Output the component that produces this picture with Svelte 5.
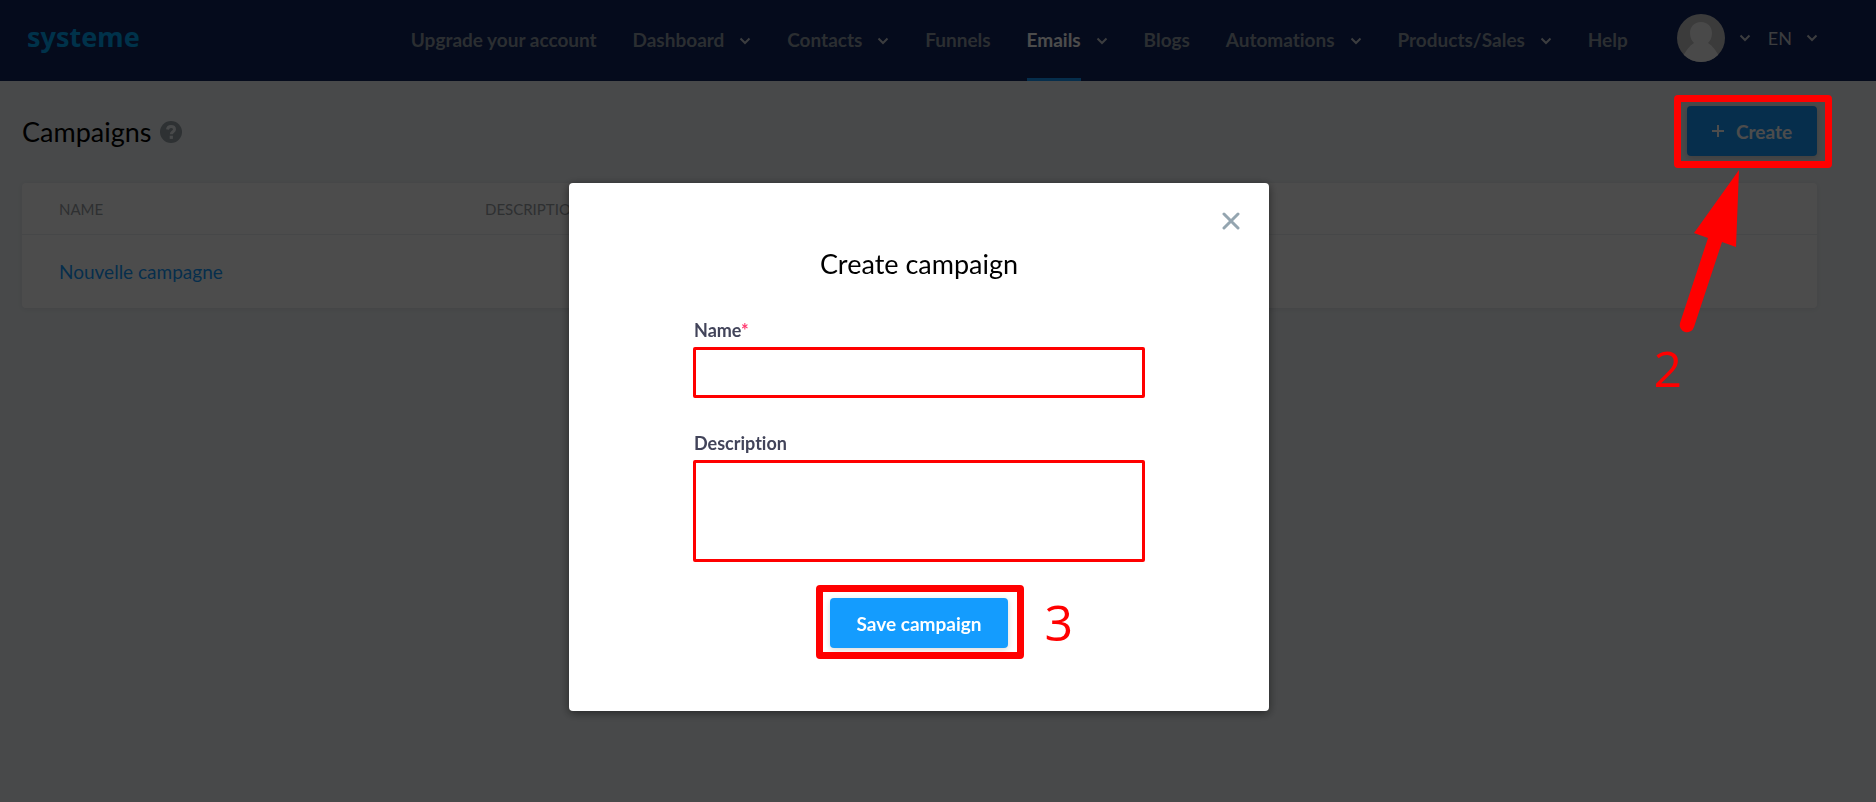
<script>
    let showModal = true;
    let name = '';
    let description = '';

    const links = [
        { label: 'Upgrade your account' },
        { label: 'Dashboard', menu: true },
        { label: 'Contacts', menu: true },
        { label: 'Funnels' },
        { label: 'Emails', menu: true, active: true },
        { label: 'Blogs' },
        { label: 'Automations', menu: true },
        { label: 'Products/Sales', menu: true },
        { label: 'Help' }
    ];

    const campaigns = [{ name: 'Nouvelle campagne', description: '' }];
</script>

{#snippet chevron()}
    <svg class="chevron" viewBox="0 0 12 8" aria-hidden="true">
        <path d="M1.500 1.500L6 6l4.500-4.500" />
    </svg>
{/snippet}

<div class="page">
    <header>
        <a class="logo" href="#home">systeme</a>
        <nav>
            {#each links as link}
                <a href="#{link.label}" class:active={link.active}>
                    <span>{link.label}</span>
                    {#if link.menu}{@render chevron()}{/if}
                </a>
            {/each}
        </nav>
        <button class="account" aria-label="Account">
            <svg class="avatar" viewBox="0 0 48 48" aria-hidden="true">
                <clipPath id="round"><circle cx="24" cy="24" r="24" /></clipPath>
                <g clip-path="url(#round)">
                    <rect width="48" height="48" fill="#c5c5c5" />
                    <path d="M24 8c7 0 11 5 11 11 0 5-2 8-4 10 5 3 8 8 11 13v8H6v-8c3-5 6-10 11-13-2-2-4-5-4-10C13 13 17 8 24 8z" fill="#f4f4f4" />
                </g>
            </svg>
            {@render chevron()}
        </button>
        <button class="lang">
            EN
            {@render chevron()}
        </button>
    </header>

    <main>
        <div class="title-row">
            <div class="title">
                <h1>Campaigns</h1>
                <svg class="help" viewBox="0 0 22 22" aria-hidden="true">
                    <circle cx="11" cy="11" r="11" />
                    <path d="M7.500 8.500C7.800 6.300 9.200 5.500 11 5.500c2 0 3.500 1.100 3.500 2.900 0 2.300-3.200 2.300-3.200 4.800" />
                    <rect x="9.700" y="14.700" width="3.200" height="3.200" />
                </svg>
            </div>
            <div class="create-wrap">
                <button class="primary create" on:click={() => showModal = true}>
                    <svg class="plus" viewBox="0 0 12 12" aria-hidden="true"><path d="M6 0v12M0 6h12" /></svg>
                    Create
                </button>
                <div class="marker create-marker"></div>
                <svg class="arrow" viewBox="0 0 64 168" aria-hidden="true">
                    <path d="M62 3L59 80 45 75 17 160a7 7 0 0 1-14-4L31 71 17 66z" />
                </svg>
                <span class="step step-two">2</span>
            </div>
        </div>

        <table>
            <thead>
                <tr>
                    <th>NAME</th>
                    <th>DESCRIPTION</th>
                </tr>
            </thead>
            <tbody>
                {#each campaigns as campaign}
                    <tr>
                        <td><a href="#campaign">{campaign.name}</a></td>
                        <td>{campaign.description}</td>
                    </tr>
                {/each}
            </tbody>
        </table>
    </main>
</div>

{#if showModal}
<div class="overlay">
    <div class="modal" role="dialog" aria-modal="true" aria-labelledby="modal-title">
        <button class="close" on:click={() => showModal = false} aria-label="Close">
            <svg viewBox="0 0 18 18" aria-hidden="true"><path d="M2 2l14 14M16 2L2 16" /></svg>
        </button>
        <h2 id="modal-title">Create campaign</h2>
        <form on:submit|preventDefault>
            <label for="name">Name<span class="required">*</span></label>
            <input id="name" type="text" bind:value={name} />
            <label for="description">Description</label>
            <textarea id="description" bind:value={description}></textarea>
            <div class="save-wrap">
                <button class="primary save" type="submit">Save campaign</button>
                <div class="marker save-marker"></div>
                <span class="step step-three">3</span>
            </div>
        </form>
    </div>
</div>
{/if}

<style>
    :global(body) {
        margin: 0;
        background: #f1f5f8;
        font-family: Lato, "Open Sans", sans-serif;
        font-variant-ligatures: none;
    }

    .page {
        min-height: 100vh;
    }

    a {
        text-decoration: none;
    }

    button {
        font-family: inherit;
        border: none;
        background: none;
        padding: 0;
        cursor: pointer;
    }

    /* --- HEADER --- */
    header {
        display: flex;
        align-items: center;
        height: 81px;
        padding: 0 58px 0 27px;
        background: #11255e;
    }

    .logo {
        color: #00a8f8;
        font-family: "Noto Sans", sans-serif;
        font-size: 27px;
        font-weight: 700;
        line-height: 32px;
        padding-bottom: 8px;
    }

    nav {
        flex: 1;
        display: flex;
        justify-content: space-between;
        align-self: stretch;
        margin: 0 49px 0 271px;
    }

    nav a {
        display: flex;
        align-items: center;
        gap: 15px;
        color: #8f9ba5;
        font-size: 19px;
        font-weight: 700;
    }

    nav span {
        height: 78px;
        line-height: 80px;
        border-bottom: 3px solid transparent;
    }

    nav .active span {
        color: #fff;
        border-color: #149cfe;
    }

    .chevron {
        width: 12px;
        height: 8px;
        fill: none;
        stroke: #c8ccd2;
        stroke-width: 2;
    }

    .account,
    .lang {
        display: flex;
        align-items: center;
        gap: 14px;
        color: #c8ccd2;
        font-size: 18px;
        padding-bottom: 5px;
    }

    .lang {
        margin-left: 17px;
    }

    .avatar {
        width: 48px;
        height: 48px;
    }

    /* --- CONTENT --- */
    main {
        padding: 25px 59px 0 22px;
    }

    .title-row,
    .title {
        display: flex;
        align-items: center;
    }

    .title-row {
        justify-content: space-between;
        margin-bottom: 27px;
    }

    .title {
        gap: 8px;
        padding-top: 2px;
    }

    h1,
    h2 {
        margin: 0;
        font-size: 27px;
        font-weight: 400;
        line-height: 32px;
    }

    .help {
        width: 22px;
        height: 22px;
        fill: #99a3aa;
    }

    .help path {
        fill: none;
        stroke: #f1f5f8;
        stroke-width: 3;
    }

    .help rect {
        fill: #f1f5f8;
    }

    .primary {
        height: 50px;
        border-radius: 4px;
        background: #149cfe;
        box-shadow: 0 2px 6px rgba(0, 0, 0, 0.15);
        color: #fff;
        font-size: 19px;
        font-weight: 700;
    }

    .create-wrap {
        position: relative;
    }

    .create {
        display: flex;
        align-items: center;
        justify-content: center;
        gap: 12px;
        width: 130px;
    }

    .plus {
        width: 12px;
        height: 12px;
        fill: none;
        stroke: #fff;
        stroke-width: 2;
    }

    table {
        width: 100%;
        table-layout: fixed;
        border-spacing: 0;
        background: #fff;
        border-radius: 4px;
        box-shadow: 0 1px 6px rgba(0, 0, 0, 0.08);
    }

    th,
    td {
        padding: 0 0 0 37px;
        text-align: left;
    }

    th {
        height: 51px;
        color: #9aa0a6;
        font-size: 15px;
        font-weight: 400;
        border-bottom: 1px solid #eceef0;
    }

    th:first-child {
        width: 389px;
    }

    td {
        height: 73px;
        font-size: 19px;
    }

    td a {
        color: #149cfe;
    }

    /* --- MODAL --- */
    .overlay {
        position: fixed;
        inset: 0;
        z-index: 10;
        display: flex;
        justify-content: center;
        align-items: flex-start;
        padding: 183px 38px 0 0;
        background: rgba(0, 0, 0, 0.7);
    }

    .modal {
        position: relative;
        box-sizing: border-box;
        width: 700px;
        padding: 65px 124px 63px;
        border-radius: 4px;
        background: #fff;
        box-shadow: 0 2px 10px rgba(0, 0, 0, 0.5);
    }

    .close {
        position: absolute;
        top: 29px;
        right: 29px;
        width: 18px;
        height: 18px;
    }

    .close svg {
        display: block;
        fill: none;
        stroke: #94a5b0;
        stroke-width: 3;
        stroke-linecap: round;
    }

    h2 {
        text-align: center;
        margin-bottom: 38px;
    }

    form {
        display: flex;
        flex-direction: column;
    }

    label {
        color: #42445a;
        font-size: 18px;
        font-weight: 700;
        line-height: 24px;
        margin-bottom: 5px;
        padding-left: 1px;
    }

    .required {
        color: #ff3b70;
    }

    input,
    textarea {
        box-sizing: border-box;
        padding: 8px 12px;
        border: 3px solid #f00;
        border-radius: 2px;
        background: #fff;
        font: inherit;
        font-size: 18px;
        outline: none;
        resize: none;
    }

    input {
        height: 51px;
        margin-bottom: 33px;
    }

    textarea {
        height: 102px;
        margin-bottom: 36px;
    }

    .save-wrap {
        position: relative;
        align-self: center;
    }

    .save {
        display: block;
        width: 178px;
    }

    /* --- STEP MARKERS, drawn above the overlay --- */
    .marker {
        position: absolute;
        z-index: 20;
        border: 7px solid #f00;
        border-radius: 4px;
        pointer-events: none;
    }

    .create-marker {
        inset: -11px -15px -12px -13px;
    }

    .save-marker {
        inset: -13px -16px -11px -14px;
    }

    .arrow {
        position: absolute;
        z-index: 20;
        top: 61px;
        right: 76px;
        width: 64px;
        height: 168px;
        fill: #f00;
    }

    .step {
        position: absolute;
        z-index: 20;
        color: #f00;
        font-family: "Open Sans", sans-serif;
        font-size: 50px;
        font-weight: 500;
        line-height: 50px;
    }

    .step-two {
        top: 237px;
        right: 135px;
    }

    .step-three {
        top: -1px;
        right: -65px;
    }
</style>
